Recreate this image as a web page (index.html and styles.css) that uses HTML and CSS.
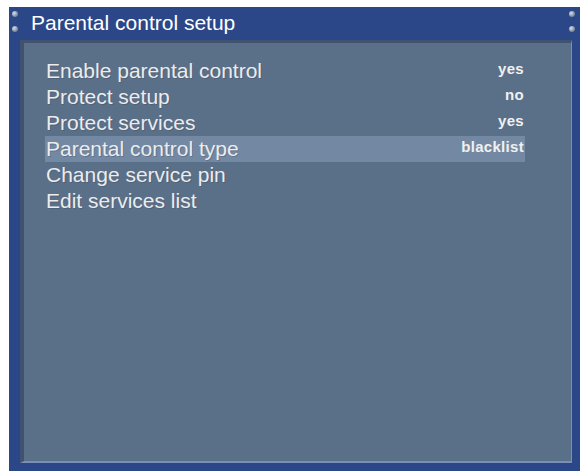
FILE: index.html
```html
<!DOCTYPE html>
<html>
<head>
<meta charset="utf-8">
<link rel="stylesheet" href="styles.css">
</head>
<body>
<div class="frame">
  <div class="titlebar">
    <div class="screws"><span class="screw"></span><span class="screw"></span></div>
    <div class="title">Parental control setup</div>
    <div class="screws right"><span class="screw"></span><span class="screw"></span></div>
  </div>
  <div class="panel">
    <div class="list">
      <div class="row"><span class="label">Enable parental control</span><span class="value">yes</span></div>
      <div class="row"><span class="label">Protect setup</span><span class="value">no</span></div>
      <div class="row"><span class="label">Protect services</span><span class="value">yes</span></div>
      <div class="row selected"><span class="label">Parental control type</span><span class="value">blacklist</span></div>
      <div class="row"><span class="label">Change service pin</span><span class="value"></span></div>
      <div class="row"><span class="label">Edit services list</span><span class="value"></span></div>
    </div>
  </div>
</div>
</body>
</html>
```
FILE: styles.css
```css
html, body {
  margin: 0;
  padding: 0;
  background: #ffffff;
}
body {
  width: 582px;
  height: 476px;
  overflow: hidden;
  font-family: "Liberation Sans", Arial, sans-serif;
}
.frame {
  position: relative;
  margin: 7px 0 0 9px;
  width: 571px;
  height: 464px;
  background: #2b4787;
  box-sizing: border-box;
  display: flex;
  flex-direction: column;
  padding: 0 8px 8px 11px;
}
.titlebar {
  height: 33px;
  display: flex;
  align-items: center;
  margin-left: -11px;
  margin-right: -8px;
  padding: 0 3px 0 3px;
}
.screws {
  width: 8px;
  display: flex;
  flex-direction: column;
  gap: 9px;
  margin-top: -4px;
}
.screws.right {
  margin-left: auto;
}
.screw {
  display: block;
  width: 6px;
  height: 6px;
  border-radius: 50%;
  background: radial-gradient(circle at 35% 35%, #d8dee8 0, #8a98ac 55%, #4a5a78 100%);
}
.title {
  color: #ffffff;
  font-size: 21px;
  margin-left: 11px;
  margin-top: -1px;
}
.panel {
  flex: 1;
  background: #5a7089;
  border-left: 4px solid #3f5270;
  border-top: 3px solid #3f5270;
  border-right: 1px solid #7a90b0;
  border-bottom: 2px solid #7890b8;
  padding: 15px 46px 0 21px;
}
.list {
  display: flex;
  flex-direction: column;
}
.row {
  height: 26px;
  display: flex;
  align-items: center;
  justify-content: space-between;
  color: #ececec;
}
.row.selected {
  background: #7389a3;
}
.label {
  font-size: 21px;
  padding-left: 1px;
  text-shadow: 1px 1px 0 rgba(60,70,90,0.35);
}
.value {
  font-size: 15px;
  font-weight: bold;
  letter-spacing: 0.3px;
  color: #f0f0f0;
  padding-right: 1px;
  margin-top: -5px;
}
```
